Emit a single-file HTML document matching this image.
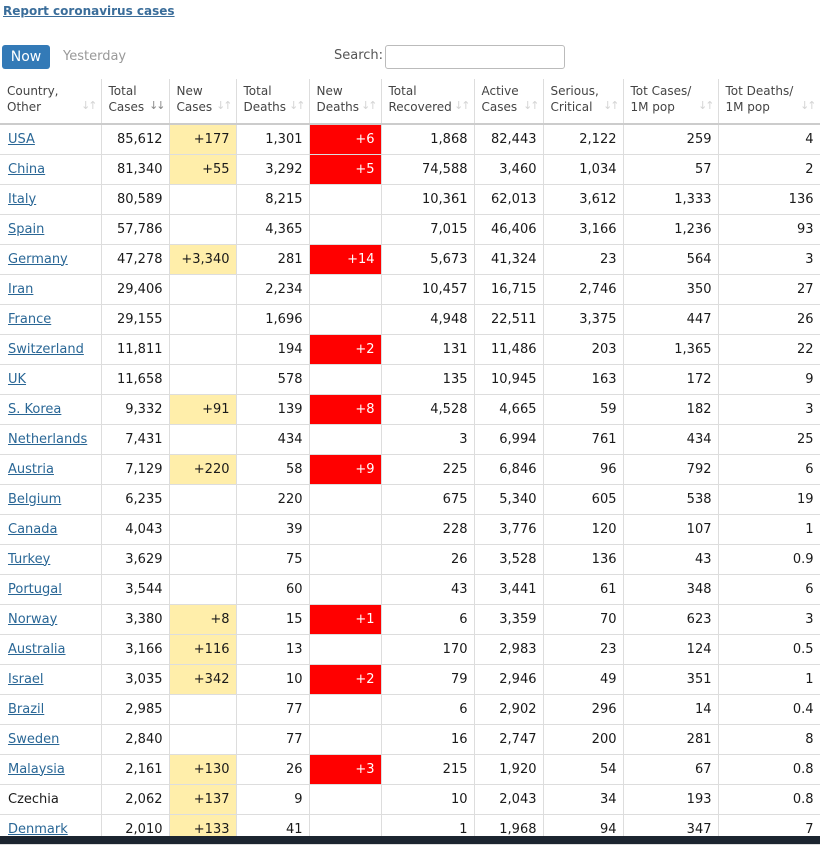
<!DOCTYPE html>
<html><head><meta charset="utf-8">
<style>
*{margin:0;padding:0;box-sizing:border-box}
body{width:820px;height:844px;overflow:hidden;background:#fff;font-family:"DejaVu Sans",Verdana,sans-serif;color:#333;position:relative}
.rep{position:absolute;left:3px;top:4px;font-size:12px;font-weight:bold;color:#3a6d9a;text-decoration:underline}
.now{position:absolute;left:2px;top:45px;width:48px;height:24px;background:#337ab7;color:#fff;font-size:14px;line-height:24px;text-align:center;border-radius:3px}
.yes{position:absolute;left:63px;top:49px;font-size:13px;color:#999}
.sl{position:absolute;left:334px;top:48px;font-size:13px;color:#555}
.si{position:absolute;left:385px;top:45px;width:180px;height:24px;border:1px solid #bbb;border-radius:3px}
table{position:absolute;left:0;top:79px;border-collapse:collapse;table-layout:fixed;width:820px}
th,td{border-right:1px solid #ddd;font-size:13px}
th{height:45px;text-align:left;font-weight:normal;color:#444;vertical-align:top;padding:4px 6px 0 7px;line-height:16px;font-size:12px;border-bottom:2px solid #ccc;position:relative}
th i{position:absolute;right:5px;bottom:9px;font-style:normal;color:#d4d4d4;font-size:11px;letter-spacing:-2px}
td{height:30px;border-bottom:1px solid #ddd;text-align:right;padding:0 6px;white-space:nowrap;color:#1a1a1a}
td:first-child{text-align:left;padding-left:8px}
td a{color:#2a6796;text-decoration:underline}
.y{background:#ffeeaa}
.r{background:#ff0000;color:#fff}
.bar{position:absolute;left:0;top:836px;width:820px;height:8px;background:#1c2530}
</style></head><body>
<div class="rep">Report coronavirus cases</div>
<div class="now">Now</div><div class="yes">Yesterday</div>
<div class="sl">Search:</div><div class="si"></div>
<table>
<colgroup><col style="width:101px"><col style="width:68px"><col style="width:67px"><col style="width:73px"><col style="width:72px"><col style="width:93px"><col style="width:69px"><col style="width:80px"><col style="width:95px"><col style="width:102px"></colgroup>
<tr><th>Country,<br>Other<i>↓↑</i></th><th>Total<br>Cases<i style="color:#888">↓↓</i></th><th>New<br>Cases<i>↓↑</i></th><th>Total<br>Deaths<i>↓↑</i></th><th>New<br>Deaths<i>↓↑</i></th><th>Total<br>Recovered<i>↓↑</i></th><th>Active<br>Cases<i>↓↑</i></th><th>Serious,<br>Critical<i>↓↑</i></th><th>Tot Cases/<br>1M pop<i>↓↑</i></th><th>Tot Deaths/<br>1M pop<i>↓↑</i></th></tr>
<tr><td><a>USA</a></td><td>85,612</td><td class="y">+177</td><td>1,301</td><td class="r">+6</td><td>1,868</td><td>82,443</td><td>2,122</td><td>259</td><td>4</td></tr>
<tr><td><a>China</a></td><td>81,340</td><td class="y">+55</td><td>3,292</td><td class="r">+5</td><td>74,588</td><td>3,460</td><td>1,034</td><td>57</td><td>2</td></tr>
<tr><td><a>Italy</a></td><td>80,589</td><td></td><td>8,215</td><td></td><td>10,361</td><td>62,013</td><td>3,612</td><td>1,333</td><td>136</td></tr>
<tr><td><a>Spain</a></td><td>57,786</td><td></td><td>4,365</td><td></td><td>7,015</td><td>46,406</td><td>3,166</td><td>1,236</td><td>93</td></tr>
<tr><td><a>Germany</a></td><td>47,278</td><td class="y">+3,340</td><td>281</td><td class="r">+14</td><td>5,673</td><td>41,324</td><td>23</td><td>564</td><td>3</td></tr>
<tr><td><a>Iran</a></td><td>29,406</td><td></td><td>2,234</td><td></td><td>10,457</td><td>16,715</td><td>2,746</td><td>350</td><td>27</td></tr>
<tr><td><a>France</a></td><td>29,155</td><td></td><td>1,696</td><td></td><td>4,948</td><td>22,511</td><td>3,375</td><td>447</td><td>26</td></tr>
<tr><td><a>Switzerland</a></td><td>11,811</td><td></td><td>194</td><td class="r">+2</td><td>131</td><td>11,486</td><td>203</td><td>1,365</td><td>22</td></tr>
<tr><td><a>UK</a></td><td>11,658</td><td></td><td>578</td><td></td><td>135</td><td>10,945</td><td>163</td><td>172</td><td>9</td></tr>
<tr><td><a>S. Korea</a></td><td>9,332</td><td class="y">+91</td><td>139</td><td class="r">+8</td><td>4,528</td><td>4,665</td><td>59</td><td>182</td><td>3</td></tr>
<tr><td><a>Netherlands</a></td><td>7,431</td><td></td><td>434</td><td></td><td>3</td><td>6,994</td><td>761</td><td>434</td><td>25</td></tr>
<tr><td><a>Austria</a></td><td>7,129</td><td class="y">+220</td><td>58</td><td class="r">+9</td><td>225</td><td>6,846</td><td>96</td><td>792</td><td>6</td></tr>
<tr><td><a>Belgium</a></td><td>6,235</td><td></td><td>220</td><td></td><td>675</td><td>5,340</td><td>605</td><td>538</td><td>19</td></tr>
<tr><td><a>Canada</a></td><td>4,043</td><td></td><td>39</td><td></td><td>228</td><td>3,776</td><td>120</td><td>107</td><td>1</td></tr>
<tr><td><a>Turkey</a></td><td>3,629</td><td></td><td>75</td><td></td><td>26</td><td>3,528</td><td>136</td><td>43</td><td>0.9</td></tr>
<tr><td><a>Portugal</a></td><td>3,544</td><td></td><td>60</td><td></td><td>43</td><td>3,441</td><td>61</td><td>348</td><td>6</td></tr>
<tr><td><a>Norway</a></td><td>3,380</td><td class="y">+8</td><td>15</td><td class="r">+1</td><td>6</td><td>3,359</td><td>70</td><td>623</td><td>3</td></tr>
<tr><td><a>Australia</a></td><td>3,166</td><td class="y">+116</td><td>13</td><td></td><td>170</td><td>2,983</td><td>23</td><td>124</td><td>0.5</td></tr>
<tr><td><a>Israel</a></td><td>3,035</td><td class="y">+342</td><td>10</td><td class="r">+2</td><td>79</td><td>2,946</td><td>49</td><td>351</td><td>1</td></tr>
<tr><td><a>Brazil</a></td><td>2,985</td><td></td><td>77</td><td></td><td>6</td><td>2,902</td><td>296</td><td>14</td><td>0.4</td></tr>
<tr><td><a>Sweden</a></td><td>2,840</td><td></td><td>77</td><td></td><td>16</td><td>2,747</td><td>200</td><td>281</td><td>8</td></tr>
<tr><td><a>Malaysia</a></td><td>2,161</td><td class="y">+130</td><td>26</td><td class="r">+3</td><td>215</td><td>1,920</td><td>54</td><td>67</td><td>0.8</td></tr>
<tr><td>Czechia</td><td>2,062</td><td class="y">+137</td><td>9</td><td></td><td>10</td><td>2,043</td><td>34</td><td>193</td><td>0.8</td></tr>
<tr><td><a>Denmark</a></td><td>2,010</td><td class="y">+133</td><td>41</td><td></td><td>1</td><td>1,968</td><td>94</td><td>347</td><td>7</td></tr>
</table>
<div class="bar"></div>
</body></html>
